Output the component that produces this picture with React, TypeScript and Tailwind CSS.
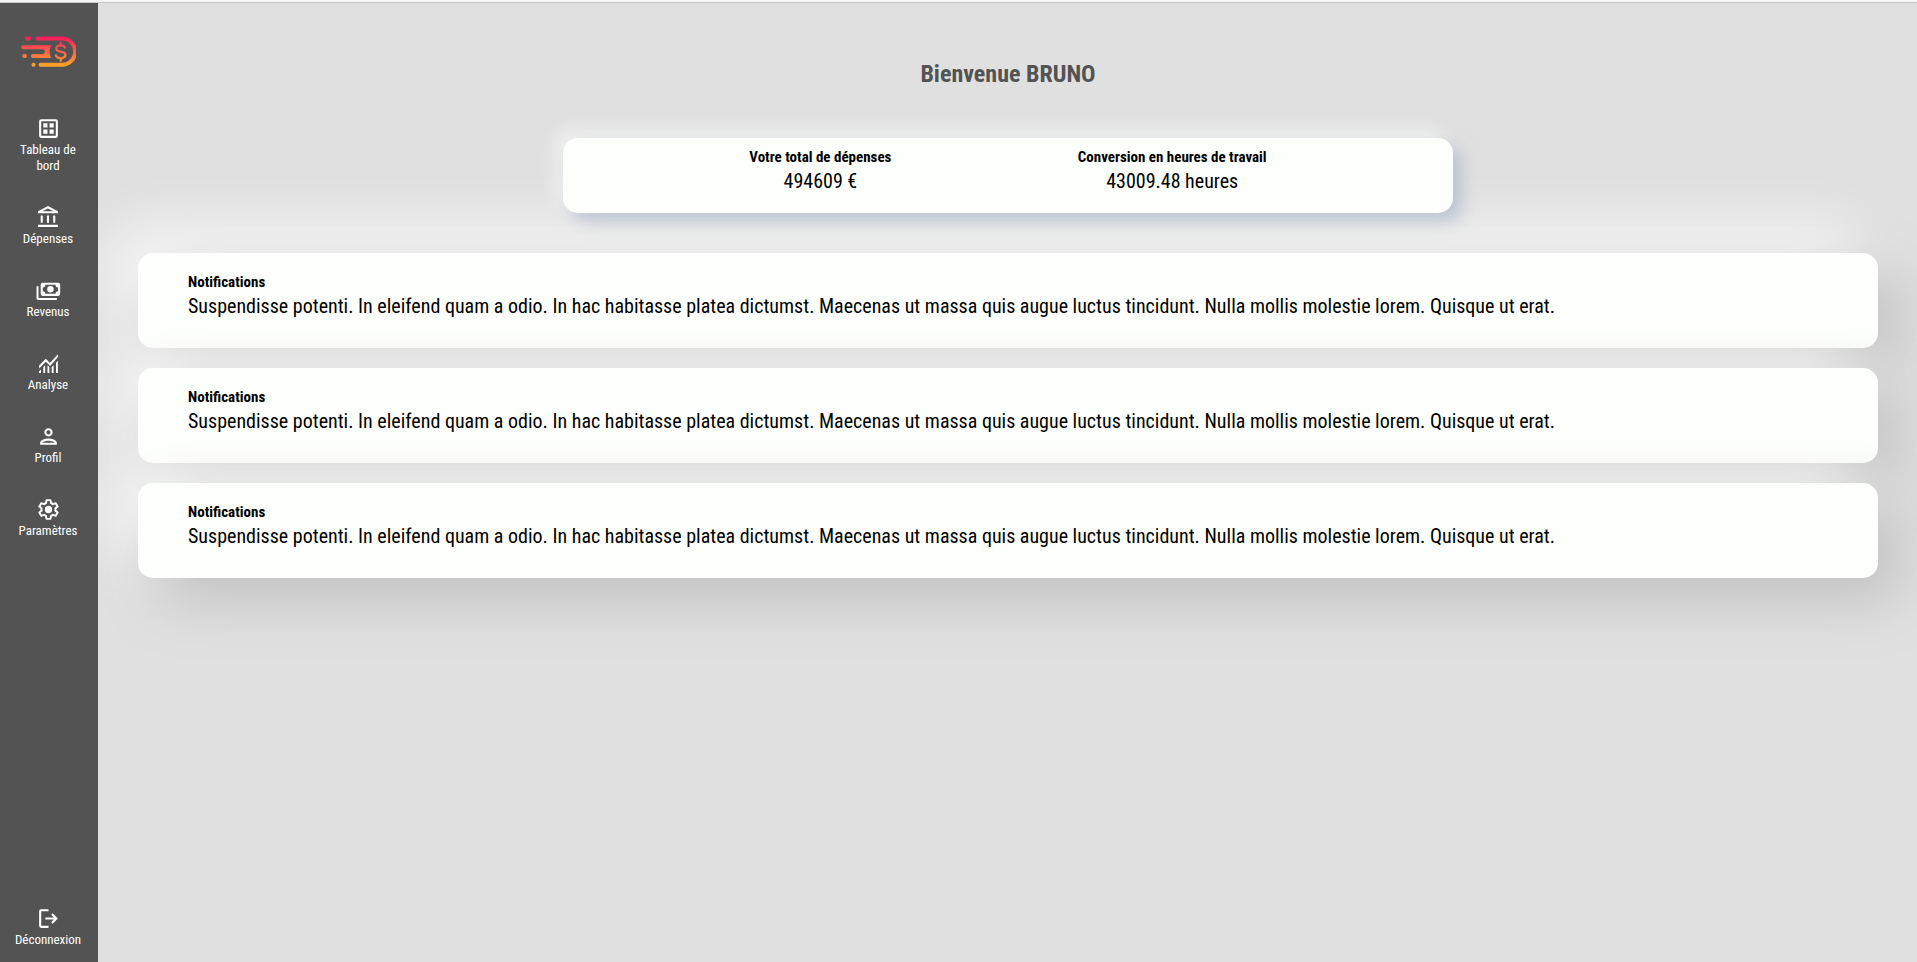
import type { ReactNode } from "react";
import {
  MdOutlineAccountBalance,
  MdOutlineDataset,
  MdOutlinePerson,
} from "react-icons/md";

function Logo() {
  return (
    <svg viewBox="0 0 56 32" className="h-8 w-14" fill="none" role="img" aria-label="Accueil">
      <defs>
        <linearGradient id="logo-gradient" x1="0" y1="0" x2="0" y2="32" gradientUnits="userSpaceOnUse">
          <stop offset="0.05" stopColor="#f9185f" />
          <stop offset="0.5" stopColor="#f9604a" />
          <stop offset="0.95" stopColor="#fba226" />
        </linearGradient>
      </defs>
      <g stroke="url(#logo-gradient)" strokeWidth="4" strokeLinecap="round">
        <path d="M17.5 3.500H42a13 13 0 0 1 0 26.200H20.500" />
        <path d="M7.200 3.510h1.800M4.200 21.110h.8M13.400 29.690h.2" />
      </g>
      <path
        fill="url(#logo-gradient)"
        d="M3.300 10.200H31.200c-2.200 4-2.200 8.800 0 12.900H13a2 2 0 0 1 0-4.100h9.500c3.200 0 3.200-4.700 0-4.700H3.300a2 2 0 0 1 0-4.100z"
      />
      <path
        d="M45 12.500c-.6-1.500-2.200-2.200-4.200-2.200-2.700 0-4.400 1.200-4.400 3.100 0 4.600 9 1.900 9 6.400 0 2-1.900 3.300-4.600 3.300-2.400 0-4.300-1-4.900-2.700M40.800 7.700v2.600M40.800 23.100v2.600"
        stroke="url(#logo-gradient)"
        strokeWidth="2.300"
        strokeLinecap="round"
      />
    </svg>
  );
}

function CashIcon() {
  return (
    <svg viewBox="0 0 24 24" className="size-[25px]" fill="currentColor" aria-hidden="true">
      <path d="M.5 8h1.900v11.200H20v1.900H2.200A1.700 1.700 0 0 1 .5 19.400z" />
      <path
        fillRule="evenodd"
        d="M6.500 4.500h14.700a2 2 0 0 1 2 2v8.700a2 2 0 0 1-2 2H6.500a2 2 0 0 1-2-2V6.500a2 2 0 0 1 2-2zM9 6.500a2.500 2.500 0 0 1-2.500 2.500v3.700A2.500 2.500 0 0 1 9 15.200h9.700a2.500 2.500 0 0 1 2.500-2.500V9a2.500 2.500 0 0 1-2.500-2.500z"
      />
      <circle cx="13.850" cy="10.850" r="3.100" />
    </svg>
  );
}

function FinanceIcon() {
  return (
    <svg viewBox="0 0 24 24" className="size-[25px]" fill="currentColor" aria-hidden="true">
      <path d="M3 13.900 9.400 7.500l4 4L21 3.200v2.900l-7.500 8.200-4.100-4L3 16.700z" />
      <path d="M3 19.500 4.800 17.700V21H3zM7 15.400l1.800-1.800V21H7zM11 13.600l1.800 1.800V21H11zM15.100 15.400l1.800-1.800V21h-1.800zM19.200 11.300 21 9.400V21h-1.800z" />
    </svg>
  );
}

function GearIcon() {
  return (
    <svg viewBox="0 0 24 24" className="size-[25px]" aria-hidden="true">
      <path
        fill="none"
        stroke="currentColor"
        strokeWidth="1.900"
        strokeLinejoin="round"
        d="M10.100 3h3.800l.5 2.800a6.500 6.500 0 0 1 1.900 1.100l2.600-1 1.900 3.300-2.200 1.700a6.500 6.500 0 0 1 0 2.200l2.200 1.700-1.900 3.300-2.600-1a6.500 6.500 0 0 1-1.900 1.100l-.5 2.800h-3.800l-.5-2.800a6.500 6.500 0 0 1-1.900-1.100l-2.600 1-1.900-3.300 2.200-1.700a6.500 6.500 0 0 1 0-2.200L3.200 9.200l1.900-3.300 2.600 1a6.500 6.500 0 0 1 1.900-1.100z"
      />
      <circle cx="12" cy="12" r="3.500" fill="currentColor" />
    </svg>
  );
}

function LogoutIcon() {
  return (
    <svg viewBox="0 0 24 24" className="size-[25px]" fill="currentColor" aria-hidden="true">
      <path d="M5 21a2 2 0 0 1-2-2V5a2 2 0 0 1 2-2h7v2H5v14h7v2zM16 17l-1.375-1.450L17.175 13H9v-2h8.175l-2.550-2.550L16 7l5 5z" />
    </svg>
  );
}

const links: { label: string; icon: ReactNode }[] = [
  { label: "Tableau de bord", icon: <MdOutlineDataset size={25} /> },
  { label: "Dépenses", icon: <MdOutlineAccountBalance size={25} /> },
  { label: "Revenus", icon: <CashIcon /> },
  { label: "Analyse", icon: <FinanceIcon /> },
  { label: "Profil", icon: <MdOutlinePerson size={25} /> },
  { label: "Paramètres", icon: <GearIcon /> },
];

const totals = [
  { label: "Votre total de dépenses", value: "494609 €" },
  { label: "Conversion en heures de travail", value: "43009.48 heures" },
];

const message =
  "Suspendisse potenti. In eleifend quam a odio. In hac habitasse platea dictumst. Maecenas ut massa quis augue luctus tincidunt. Nulla mollis molestie lorem. Quisque ut erat.";

const notifications = [1, 2, 3];

export default function App() {
  return (
    <div className="flex min-h-screen flex-col bg-[#e0e0e0] font-['Roboto_Condensed','Roboto',sans-serif] text-black">
      <div className="h-[3px] border-b border-[#c8c8c8] bg-[#f5f5f5]" />
      <div className="flex flex-1">
        <nav className="z-10 flex w-[98px] shrink-0 flex-col bg-[#535353] pt-8 pr-[13px] pb-[14px] pl-[11px] text-[13px] leading-4 text-white">
          <a href="#" className="mb-[49px] flex justify-center">
            <Logo />
          </a>
          <ul className="flex flex-col gap-[31px]">
            {links.map(({ label, icon }) => (
              <li key={label}>
                <a href="#" className="flex flex-col items-center gap-px text-center">
                  {icon}
                  {label}
                </a>
              </li>
            ))}
          </ul>
          <a href="#" className="mt-auto flex flex-col items-center gap-px">
            <LogoutIcon />
            Déconnexion
          </a>
        </nav>

        <main className="flex min-w-0 flex-1 flex-col gap-10 pt-14 pr-[39px] pl-10">
          <h1 className="text-center text-2xl leading-[30px] font-bold text-[#535353]">Bienvenue BRUNO</h1>

          <section className="z-10 mx-auto mt-[9px] flex w-full max-w-[890px] justify-evenly rounded-[15px] bg-[#fdfffc] pt-2 pb-[18px] text-center shadow-[9px_9px_16px_rgba(163,177,198,0.6),-9px_-9px_16px_rgba(255,255,255,0.5)]">
            {totals.map(({ label, value }) => (
              <div key={label}>
                <h2 className="text-[15px] leading-[22px] font-bold">{label}</h2>
                <p className="text-xl leading-[27px]">{value}</p>
              </div>
            ))}
          </section>

          <div className="space-y-5">
            {notifications.map((id) => (
              <article
                key={id}
                className="rounded-[15px] bg-[#fdfffc] px-[50px] pt-[18px] pb-7 shadow-[20px_20px_60px_#bebebe,-20px_-20px_60px_#ffffff]"
              >
                <h2 className="text-[15px] leading-[22px] font-bold">Notifications</h2>
                <p className="text-xl leading-[27px]">{message}</p>
              </article>
            ))}
          </div>
        </main>
      </div>
    </div>
  );
}
